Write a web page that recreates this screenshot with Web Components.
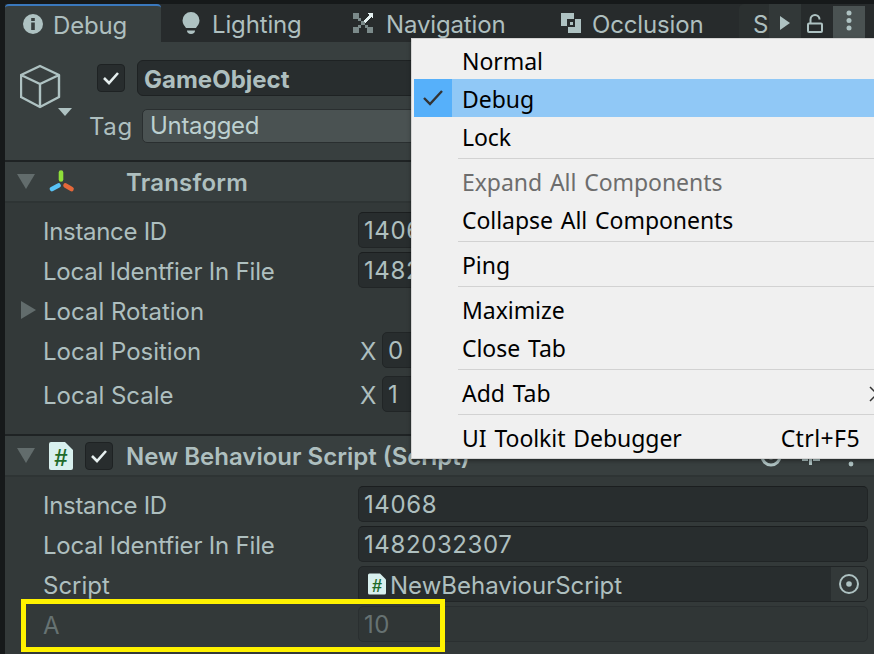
<!DOCTYPE html>
<html>
<head>
<meta charset="utf-8">
<title>Inspector</title>
<style>
    html, body { margin: 0; height: 100%; overflow: hidden; background: #16191a; }
    body { font-family: "Inter", "Liberation Sans", sans-serif; font-size: 24px; color: #aebfbf; }
</style>
</head>
<body>
<inspector-window>
    <inspector-tab slot="tabs" active style="width:156px" gap="10" pad="18">
        <svg slot="icon" width="20" height="20" viewBox="0 0 20 20"><circle cx="10" cy="10" r="10" fill="#aec2c2"/><rect x="8.2" y="8.5" width="3.6" height="7.5" fill="#383f3f"/><rect x="8.2" y="4" width="3.6" height="3" fill="#383f3f"/></svg>
        Debug
    </inspector-tab>
    <inspector-tab slot="tabs" style="width:179px" gap="12" pad="21">
        <svg slot="icon" width="18" height="24" viewBox="0 0 18 24"><path d="M9 1a8.500 8.500 0 0 1 8.500 8.500c0 3.500-2 5-3.500 7.500h-10C2.500 14.500.5 13 .5 9.500A8.500 8.500 0 0 1 9 1z" fill="#aec2c2"/><path d="M5 19.500h8c0 2-1.500 3.500-4 3.500s-4-1.500-4-3.500z" fill="#aec2c2"/></svg>
        Lighting
    </inspector-tab>
    <inspector-tab slot="tabs" style="width:208px" gap="13" pad="13">
        <svg slot="icon" width="20" height="20" viewBox="0 0 20 20" shape-rendering="crispEdges"><g fill="#7b8a8a"><rect width="6" height="6"/><rect y="14" width="6" height="6"/><rect x="14" y="14" width="6" height="6"/><rect x="5" y="5" width="3" height="3"/><rect x="12" y="12" width="3" height="3"/><rect x="5" y="12" width="3" height="3"/><rect x="8" y="8" width="4" height="4"/></g><path d="M14 0h6v6l-2-2-6 6-2-2 6-6z" fill="#e4f0f0"/></svg>
        Navigation
    </inspector-tab>
    <inspector-tab slot="tabs" style="width:191px" gap="11" pad="13">
        <svg slot="icon" width="20" height="20" viewBox="0 0 20 20" shape-rendering="crispEdges"><path d="M0 0h13v6h7v14H7v-7H0z" fill="#aec2c2"/><rect x="6" y="6" width="8" height="8" fill="#272b2c"/><rect x="8.500" y="8.500" width="3" height="3" fill="#aec2c2"/></svg>
        Occlusion
    </inspector-tab>
    <tab-tools slot="tabs"></tab-tools>

    <go-header slot="body"></go-header>

    <component-section slot="body" class="first">
        <svg slot="icon" width="26" height="26" viewBox="0 0 26 26" fill="none" stroke-width="4.600" stroke-linecap="round"><path d="M12 3.500v7" stroke="#8fe03a"/><path d="M3 20l6.500-3.500" stroke="#58c4f7"/><path d="M16.500 16.500l6 3.500" stroke="#e5683a"/></svg>
        <span slot="spacer" style="width:38px"></span>
        Transform
        <inspector-row><span style="letter-spacing:-.3px">Instance ID</span><value-field slot="value">14068</value-field></inspector-row>
        <inspector-row><span style="letter-spacing:-.2px">Local Identfier In File</span><value-field slot="value">1482032307</value-field></inspector-row>
        <inspector-row foldout>Local Rotation</inspector-row>
        <inspector-row>Local Position<axis-field slot="value">0</axis-field></inspector-row>
        <inspector-row style="margin-top:4px">Local Scale<axis-field slot="value">1</axis-field></inspector-row>
    </component-section>

    <component-section slot="body">
        <script-icon slot="icon" size="24"></script-icon>
        <check-box slot="spacer" style="margin-left:12px"></check-box>
        New Behaviour Script (Script)
        <header-tools slot="tools"></header-tools>
        <inspector-row><span style="letter-spacing:-.3px">Instance ID</span><value-field slot="value">14068</value-field></inspector-row>
        <inspector-row><span style="letter-spacing:-.2px">Local Identfier In File</span><value-field slot="value">1482032307</value-field></inspector-row>
        <inspector-row>Script<object-field slot="value">NewBehaviourScript</object-field></inspector-row>
        <inspector-row dim>A<value-field slot="value" dim>10</value-field></inspector-row>
    </component-section>

    <context-menu slot="overlay">
        <menu-entry>Normal</menu-entry>
        <menu-entry checked>Debug</menu-entry>
        <menu-entry>Lock</menu-entry>
        <menu-line></menu-line>
        <menu-entry disabled>Expand All Components</menu-entry>
        <menu-entry>Collapse All Components</menu-entry>
        <menu-line></menu-line>
        <menu-entry>Ping</menu-entry>
        <menu-line></menu-line>
        <menu-entry>Maximize</menu-entry>
        <menu-entry>Close Tab</menu-entry>
        <menu-line></menu-line>
        <menu-entry submenu>Add Tab</menu-entry>
        <menu-line></menu-line>
        <menu-entry shortcut="Ctrl+F5">UI Toolkit Debugger</menu-entry>
    </context-menu>

    <highlight-box slot="overlay"></highlight-box>
</inspector-window>

<script>
function define(name, html) {
    customElements.define(name, class extends HTMLElement {
        connectedCallback() {
            if (this.shadowRoot) return;
            this.attachShadow({ mode: "open" });
            this.shadowRoot.innerHTML = typeof html === 'function' ? html(this) : html;
        }
    });
}

define('inspector-window', `
    <style>
        :host { display: block; position: relative; width: 874px; height: 654px; padding-top: 4px; box-sizing: border-box; overflow: hidden; }
        .frame { margin-left: 5px; height: 650px; background: #333939; display: flex; flex-direction: column; }
        .tabs { display: flex; height: 38px; flex: none; background: #272b2c; }
    </style>
    <div class="frame">
        <div class="tabs"><slot name="tabs"></slot></div>
        <slot name="body"></slot>
    </div>
    <slot name="overlay"></slot>
`);

define('inspector-tab', (el) => `
    <style>
        :host { display: flex; align-items: center; flex: none; box-sizing: border-box; gap: ${el.getAttribute('gap') || 11}px; padding-left: ${el.getAttribute('pad') || 13}px; color: #aebfbf; height: 38px; letter-spacing: -.15px; }
        :host([active]) { background: #383f3f; border-top: 2px solid #3a78bd; border-radius: 4px 4px 0 0; }
        slot[name=icon]::slotted(*) { display: block; flex: none; }
        .t { padding-top: 3px; }
    </style>
    <slot name="icon"></slot><div class="t"><slot></slot></div>
`);

define('tab-tools', `
    <style>
        :host { display: flex; flex: 1; height: 38px; align-items: stretch; }
        .s { width: 16px; padding: 2px 0 0 14px; background: #2b3030; border-radius: 5px 0 0 0; line-height: 38px; overflow: hidden; }
        .arrow { width: 32px; background: #323838; display: flex; align-items: center; justify-content: center; }
        .lock { width: 32px; display: flex; align-items: center; justify-content: center; padding-right: 4px; box-sizing: border-box; }
        .more { width: 32px; margin: 2px 0 0 0; background: #4a5252; display: flex; align-items: center; justify-content: center; padding-bottom: 8px; box-sizing: border-box; }
        svg { display: block; }
    </style>
    <div class="s">S</div>
    <div class="arrow"><svg width="10" height="14" viewBox="0 0 10 14"><path d="M0 0l10 7-10 7z" fill="#aec2c2"/></svg></div>
    <div class="lock"><svg width="16" height="19" viewBox="0 0 16 19" fill="none" stroke="#aec2c2" stroke-width="2"><rect x="1" y="9.500" width="14" height="8.500" rx="1"/><path d="M3.500 9.500V5.500a4.500 4.500 0 0 1 9 0"/></svg></div>
    <div class="more"><svg width="6" height="21" viewBox="0 0 6 21" fill="#aec2c2"><circle cx="3" cy="3" r="2.500"/><circle cx="3" cy="10.500" r="2.500"/><circle cx="3" cy="18" r="2.500"/></svg></div>
`);

define('check-box', `
    <style>
        :host { display: flex; align-items: center; justify-content: center; flex: none; width: 28px; height: 28px; box-sizing: border-box; background: #282d2e; border: 1px solid #1e2223; border-radius: 4px; }
    </style>
    <svg width="18" height="14" viewBox="0 0 18 14" fill="none" stroke="#e6efef" stroke-width="2.600"><path d="M2 7l5 5 9-10"/></svg>
`);

define('script-icon', (el) => {
    const s = Number(el.getAttribute('size') || 24);
    return `
    <style>
        :host { display: block; flex: none; width: ${s}px; height: ${s + 4}px; position: relative; }
        svg { display: block; width: 100%; height: 100%; }
        text { font: bold 24px "Liberation Sans", sans-serif; fill: #1f6b2a; }
    </style>
    <svg viewBox="0 0 24 28"><path d="M2 0h14l8 8v18a2 2 0 0 1-2 2H2a2 2 0 0 1-2-2V2a2 2 0 0 1 2-2z" fill="#d8f0ee"/><text x="12" y="24" text-anchor="middle">#</text></svg>`;
});

define('go-header', `
    <style>
        :host { display: block; flex: none; height: 120px; box-sizing: border-box; background: #383f3f; border-bottom: 2px solid #1f2324; padding: 18px 0 0 15px; }
        .grid { display: grid; grid-template-columns: 52px 1fr; column-gap: 0; }
        .cube { position: relative; width: 52px; height: 54px; margin-top: 4px; }
        .line1 { display: flex; align-items: center; gap: 12px; height: 36px; margin-left: 25px; }
        .name { flex: 1; height: 36px; box-sizing: border-box; background: #282d2e; border: 1px solid #1e2223; border-radius: 6px; padding: 1px 0 0 6px; font-weight: 700; line-height: 36px; overflow: hidden; }
        .line2 { display: flex; align-items: center; height: 34px; margin: 13px 0 0 18px; }
        .tag { width: 52px; color: #aebfbf; margin-left: -1px; letter-spacing: .6px; }
        .popup { flex: 1; height: 34px; box-sizing: border-box; background: #4a5252; border: 1px solid #2a2f30; border-radius: 5px; padding-left: 7px; line-height: 32px; color: #bcd0d0; letter-spacing: -.3px; margin-left: 1px; }
        svg { display: block; }
    </style>
    <div class="grid">
        <div class="cube">
            <svg width="52" height="54" viewBox="0 0 52 54" fill="none"><path d="M20 2l19 9v22l-19 10L1 33V11z M1 11l19 9 19-9 M20 20v23" stroke="#aec2c2" stroke-width="2.400" stroke-linejoin="round"/><path d="M38 44h14l-7 8z" fill="#aec2c2"/></svg>
        </div>
        <div>
            <div class="line1"><check-box></check-box><div class="name">GameObject</div></div>
            <div class="line2"><div class="tag">Tag</div><div class="popup">Untagged</div></div>
        </div>
    </div>
`);

define('component-section', `
    <style>
        :host { display: block; flex: none; }
        :host(.first) .rows { height: 233px; border-bottom: 2px solid #1f2324; }
        :host(.first) .head { letter-spacing: .2px; }
        .head { display: flex; align-items: center; height: 41px; box-sizing: border-box; background: #383f3f; border-bottom: 2px solid #2e3434; padding-left: 12px; font-weight: 600; position: relative; }
        .arrow { margin-right: 14px; flex: none; }
        .spacer { display: flex; margin-right: 13px; }
        .rows { box-sizing: border-box; padding-top: 7px; }
        .title { white-space: nowrap; padding-top: 2px; }
        .tools { position: absolute; right: 0; top: 0; bottom: 0; }
    </style>
    <div class="head">
        <svg class="arrow" width="18" height="15" viewBox="0 0 18 15"><path d="M0 0h18l-9 15z" fill="#626c6c"/></svg>
        <slot name="icon"></slot>
        <div class="spacer"><slot name="spacer"></slot></div>
        <div class="title"><slot></slot></div>
        <div class="tools"><slot name="tools"></slot></div>
    </div>
    <div class="rows"><slot name="rows"></slot></div>
`);

define('header-tools', `
    <style>
        :host { display: flex; align-items: center; height: 100%; padding-right: 20px; box-sizing: border-box; }
        svg { display: block; }
        .plus { margin: 0 27px 0 19px; }
    </style>
    <svg width="22" height="22" viewBox="0 0 22 22" fill="none" stroke="#aec2c2" stroke-width="3"><circle cx="11" cy="11" r="9"/><circle cx="11" cy="11" r="2" fill="#aec2c2"/></svg>
    <svg class="plus" width="20" height="22" viewBox="0 0 20 22" fill="#aec2c2"><rect x="1" y="13" width="6" height="3"/><rect x="12" y="13" width="7" height="3"/><rect x="8" y="3" width="3" height="17"/></svg>
    <svg width="6" height="22" viewBox="0 0 6 22" fill="#aec2c2"><circle cx="3" cy="3" r="2.400"/><circle cx="3" cy="11" r="2.400"/><circle cx="3" cy="19" r="2.400"/></svg>
`);

define('inspector-row', `
    <style>
        :host { display: flex; align-items: center; height: 40px; padding-left: 38px; position: relative; color: #aebfbf; }
        :host([dim]) { color: #667272; }
        .label { width: 315px; flex: none; white-space: nowrap; padding-top: 2px; }
        .f { position: absolute; left: 16px; top: 11px; display: none; }
        :host([foldout]) .f { display: block; }
        .value { flex: 1; margin-right: 6px; min-width: 0; }
    </style>
    <svg class="f" width="15" height="18" viewBox="0 0 15 18"><path d="M0 0l15 9-15 9z" fill="#626c6c"/></svg>
    <div class="label"><slot></slot></div>
    <div class="value"><slot name="value"></slot></div>
`);

define('value-field', `
    <style>
        :host { display: block; height: 36px; box-sizing: border-box; background: #282d2e; border: 1px solid #212526; border-top-color: #1b1e1f; border-radius: 5px; padding-left: 5px; line-height: 36px; color: #aebfbf; letter-spacing: .6px; overflow: hidden; }
        :host([dim]) { background: #303636; border-color: #2a2f30; color: #667272; }
    </style>
    <slot></slot>
`);

define('axis-field', `
    <style>
        :host { display: flex; align-items: center; height: 36px; }
        .x { width: 22px; margin-left: 2px; flex: none; padding-top: 2px; }
        .box { flex: 1; height: 36px; box-sizing: border-box; background: #282d2e; border: 1px solid #212526; border-radius: 5px; padding-left: 5px; line-height: 36px; overflow: hidden; }
    </style>
    <div class="x">X</div><div class="box"><slot></slot></div>
`);

define('object-field', `
    <style>
        :host { display: flex; align-items: stretch; height: 36px; box-sizing: border-box; background: #282d2e; border: 1px solid #212526; border-radius: 5px; }
        .main { flex: 1; display: flex; align-items: center; gap: 4px; padding-left: 9px; white-space: nowrap; }
        .txt { padding-top: 2px; }
        .pick { width: 36px; background: #333939; display: flex; align-items: center; justify-content: center; border-radius: 0 4px 4px 0; }
        svg { display: block; }
    </style>
    <div class="main"><script-icon size="18"></script-icon><div class="txt"><slot></slot></div></div>
    <div class="pick"><svg width="20" height="20" viewBox="0 0 20 20" fill="none" stroke="#aec2c2" stroke-width="2"><circle cx="10" cy="10" r="9"/><circle cx="10" cy="10" r="2.800" fill="#aec2c2" stroke="none"/></svg></div>
`);

define('context-menu', `
    <style>
        :host { position: absolute; left: 411px; top: 38px; width: 463px; height: 421px; box-sizing: border-box; padding: 2px 0 2px 2px; background: #f0f0f0; border: 1px solid #d4d4d4; border-right: 0; box-shadow: 0 2px 4px rgba(0,0,0,.35); font-family: "Noto Sans", "Open Sans", sans-serif; font-size: 23px; letter-spacing: -.06px; word-spacing: 2px; color: #000; display: flex; flex-direction: column; }
    </style>
    <slot></slot>
`);

define('menu-entry', (el) => `
    <style>
        :host { display: flex; align-items: center; height: 38px; flex: none; position: relative; color: #000; white-space: nowrap; padding-left: 48px; box-sizing: border-box; padding-top: 1px; }
        :host([checked]) { background: #90c8f6; }
        :host([disabled]) { color: #6d6d6d; }
        .check { position: absolute; left: 0; top: 0; width: 38px; height: 38px; background: #56b0fa; display: none; align-items: center; justify-content: center; }
        :host([checked]) .check { display: flex; }
        .short { position: absolute; right: 14px; top: 1px; height: 37px; display: flex; align-items: center; letter-spacing: .4px; }
        .sub { position: absolute; right: -5px; top: 13px; }
    </style>
    <div class="check"><svg width="20" height="16" viewBox="0 0 20 16" fill="none" stroke="#333" stroke-width="2.400"><path d="M1 8l6 6L19 1"/></svg></div>
    <slot></slot>
    ${el.hasAttribute('shortcut') ? `<span class="short">${el.getAttribute('shortcut')}</span>` : ''}
    ${el.hasAttribute('submenu') ? `<svg class="sub" width="10" height="16" viewBox="0 0 10 16" fill="none" stroke="#333" stroke-width="1.500"><path d="M1 1l7 7-7 7"/></svg>` : ''}
`);

define('menu-line', `
    <style>
        :host { display: block; height: 7px; flex: none; box-sizing: border-box; padding-top: 3px; margin-left: 44px; }
        div { height: 1px; background: #d2d2d2; }
    </style>
    <div></div>
`);

define('highlight-box', `
    <style>
        :host { position: absolute; left: 21px; top: 599px; width: 424px; height: 53px; box-sizing: border-box; border: 5px solid #fff200; }
    </style>
`);

// rows are passed as plain children, hand them to the rows slot
document.querySelectorAll('inspector-row').forEach(r => r.slot = 'rows');
</script>
</body>
</html>
